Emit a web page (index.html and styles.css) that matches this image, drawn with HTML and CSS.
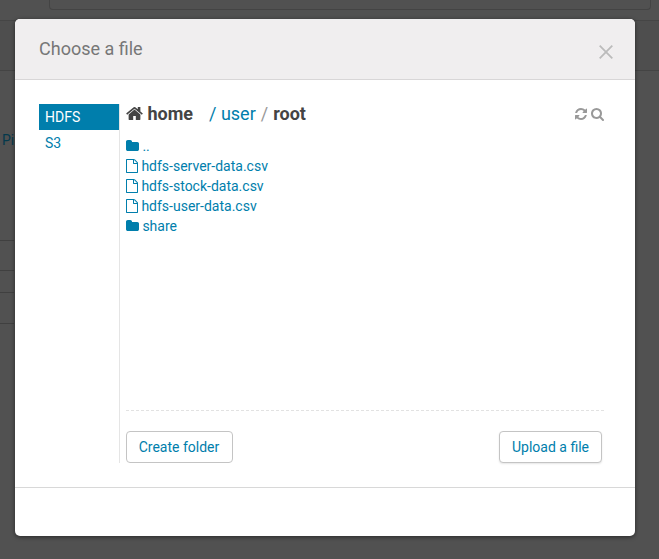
FILE: index.html
```
<!DOCTYPE html>
<html lang="en">
<head>
<meta charset="utf-8">
<title>Choose a file</title>
<link rel="stylesheet" href="styles.css">
</head>
<body>
<svg class="defs" aria-hidden="true">
  <symbol id="home" viewBox="64 253 1664 1283" preserveAspectRatio="none"><path d="M1472 992v480q0 26-19 45t-45 19h-384v-384h-256v384h-384q-26 0-45-19t-19-45v-480q0-1 .5-3t.5-3l575-474 575 474q1 2 1 6zm223-69l-62 74q-8 9-21 11h-3q-13 0-21-7l-692-577-692 577q-12 8-24 7-13-2-21-11l-62-74q-8-10-7-23.5t11-21.5l719-599q32-26 76-26t76 26l244 204v-195q0-14 9-23t23-9h192q14 0 23 9t9 23v408l219 182q10 8 11 21.5t-7 23.5z"/></symbol>
  <symbol id="folder" viewBox="64 128 1664 1408" preserveAspectRatio="none"><path d="M1728 608v704q0 92-66 158t-158 66h-1216q-92 0-158-66t-66-158v-960q0-92 66-158t158-66h320q92 0 158 66t66 158v32h672q92 0 158 66t66 158z"/></symbol>
  <symbol id="file" viewBox="128 0 1536 1792" preserveAspectRatio="none"><path d="M1596 380q28 28 48 76t20 88v1152q0 40-28 68t-68 28h-1344q-40 0-68-28t-28-68v-1600q0-40 28-68t68-28h896q40 0 88 20t76 48zm-444-244v376h376q-10-29-22-41l-313-313q-12-12-41-22zm384 1528v-1024h-416q-40 0-68-28t-28-68v-416h-768v1536h1280z"/></symbol>
  <symbol id="refresh" viewBox="128 128 1536 1536"><path d="M1639 1056q0 5-1 7-64 268-268 434.5t-478 166.5q-146 0-282.5-55t-243.5-157l-129 129q-19 19-45 19t-45-19-19-45v-448q0-26 19-45t45-19h448q26 0 45 19t19 45-19 45l-137 137q71 66 161 102t187 36q134 0 250-65t186-179q11-17 53-117 8-23 30-23h192q13 0 22.5 9.5t9.5 22.5zm25-800v448q0 26-19 45t-45 19h-448q-26 0-45-19t-19-45 19-45l138-138q-148-137-349-137-134 0-250 65t-186 179q-11 17-53 117-8 23-30 23h-199q-13 0-22.5-9.5t-9.5-22.5v-7q65-268 270-434.5t480-166.5q146 0 284 55.5t245 156.5l130-129q19-19 45-19t45 19 19 45z"/></symbol>
  <symbol id="search" viewBox="64 128 1664 1664"><path d="M1216 832q0-185-131.5-316.5t-316.5-131.5-316.5 131.5-131.5 316.5 131.5 316.5 316.5 131.5 316.5-131.5 131.5-316.5zm512 832q0 52-38 90t-90 38q-54 0-90-38l-343-342q-179 124-399 124-143 0-273.5-55.5t-225-150-150-225-55.5-273.5 55.5-273.5 150-225 225-150 273.5-55.5 273.5 55.5 225 150 150 225 55.5 273.5q0 220-124 399l343 343q37 37 37 90z"/></symbol>
</svg>
<div class="page">
  <div class="page-top"><div class="page-field"></div></div>
  <div class="page-bar"></div>
  <div class="page-body">
    <div class="page-link">Pi</div>
    <div class="page-row row-a"></div>
    <div class="page-row row-b"></div>
    <div class="page-row row-c"></div>
  </div>
</div>
<div class="overlay">
  <section class="modal">
    <header class="modal-header">
      <h3>Choose a file</h3>
      <svg class="close" viewBox="0 0 14 14"><path d="M.7.7l12.6 12.6M13.3.7L.7 13.3"/></svg>
    </header>
    <div class="modal-body">
      <nav class="sources">
        <a class="source active">HDFS</a>
        <a class="source">S3</a>
      </nav>
      <div class="browser">
        <div class="toolbar">
          <div class="crumbs">
            <svg class="icon-home"><use href="#home"/></svg>
            <b class="home">home</b>
            <a class="user">/ user</a>
            <span class="slash">/</span>
            <b>root</b>
          </div>
          <div class="tools">
            <svg class="icon-refresh"><use href="#refresh"/></svg>
            <svg class="icon-search"><use href="#search"/></svg>
          </div>
        </div>
        <ul class="files">
          <li class="dir"><svg><use href="#folder"/></svg>..</li>
          <li><svg><use href="#file"/></svg>hdfs-server-data.csv</li>
          <li><svg><use href="#file"/></svg>hdfs-stock-data.csv</li>
          <li><svg><use href="#file"/></svg>hdfs-user-data.csv</li>
          <li class="dir"><svg><use href="#folder"/></svg>share</li>
        </ul>
        <div class="divider"></div>
        <div class="actions">
          <button class="create">Create folder</button>
          <button class="upload">Upload a file</button>
        </div>
      </div>
    </div>
    <footer class="modal-footer"></footer>
  </section>
</div>
</body>
</html>
```
FILE: styles.css
```
* { box-sizing: border-box; }
body {
  margin: 0;
  height: 559px;
  overflow: hidden;
  background: #515151;
  font: 14px/20px Roboto, sans-serif;
  color: #444;
}
.defs { display: none; }
svg { fill: currentColor; flex: none; }

.page-top { height: 21px; padding: 0 8px 0 49px; border-bottom: 1px solid #454545; }
.page-field { height: 10px; border: 1px solid #444; border-top: 0; border-radius: 0 0 4px 4px; }
.page-bar { height: 50px; background: #4e4e4e; border-bottom: 1px solid #444; }
.page-body { width: 14px; padding-top: 59px; }
.page-link { height: 110px; padding-left: 2px; color: #04394c; overflow: hidden; }
.page-row { border-bottom: 1px solid #404040; }
.page-link + .row-a { border-top: 1px solid #404040; height: 31px; }
.row-b { height: 22px; }
.row-c { height: 31px; }

.overlay { position: absolute; inset: 0; padding: 19px 24px 0 15px; }
.modal {
  height: 517px;
  display: flex;
  flex-direction: column;
  background: #fff;
  border-radius: 5px;
  overflow: hidden;
  box-shadow: 0 1px 4px rgba(0, 0, 0, .5);
}
.modal-header {
  height: 61px;
  padding: 0 22px 0 24px;
  display: flex;
  justify-content: space-between;
  background: #f0eeef;
  border-bottom: 1px solid #d8d6d7;
}
h3 { margin: 20px 0 0; font-size: 18px; line-height: 20px; font-weight: 400; color: #777; }
.close { width: 14px; height: 14px; margin-top: 26px; fill: none; stroke: #bbb; stroke-width: 1.8; }
.modal-body { height: 407px; padding: 24px 29px 24px 24px; display: flex; }
.sources { width: 81px; height: 359px; border-right: 1px solid #e5e5e5; }
.source { display: block; height: 26px; padding: 3px 6px; color: #007eac; }
.source.active { background: #007eac; color: #fff; }
.browser { width: 480px; flex: none; margin-left: 6px; }
.toolbar { height: 32px; display: flex; justify-content: space-between; }
.crumbs { display: flex; height: 20px; font-size: 18px; line-height: 20px; }
.icon-home { width: 17px; height: 13px; margin: 3px 4.4px 0 0; }
.home { width: 61.6px; }
.user { color: #007eac; margin-right: 5px; }
.slash { color: #999; margin-right: 5px; }
.tools { display: flex; gap: 4px; color: #999; margin-right: 2px; }
.icon-refresh { width: 12px; height: 12px; margin-top: 4px; }
.icon-search { width: 13px; height: 13px; margin-top: 4px; }
.files { list-style: none; margin: 0; padding: 0; height: 274px; color: #007eac; }
.files li { display: flex; height: 20px; }
.files svg { width: 12px; height: 14px; margin: 3px 3.4px 0 0; }
.files .dir svg { width: 13px; height: 11px; margin-top: 4px; }
.divider {
  height: 1px;
  background: repeating-linear-gradient(90deg, #e2e2e2 0 3px, transparent 3px 5px);
}
.actions { display: flex; justify-content: space-between; padding: 20px 4px 0 0; }
button {
  height: 32px;
  padding: 0;
  font: inherit;
  color: #007eac;
  background: #fff;
  border: 1px solid #c4c4c4;
  border-radius: 4px;
}
.create { width: 107px; padding-right: 1px; }
.upload { width: 103px; box-shadow: 0 1px 2px rgba(0, 0, 0, .1); }
.modal-footer { flex: 1; border-top: 1px solid #d8d8d8; }
```
